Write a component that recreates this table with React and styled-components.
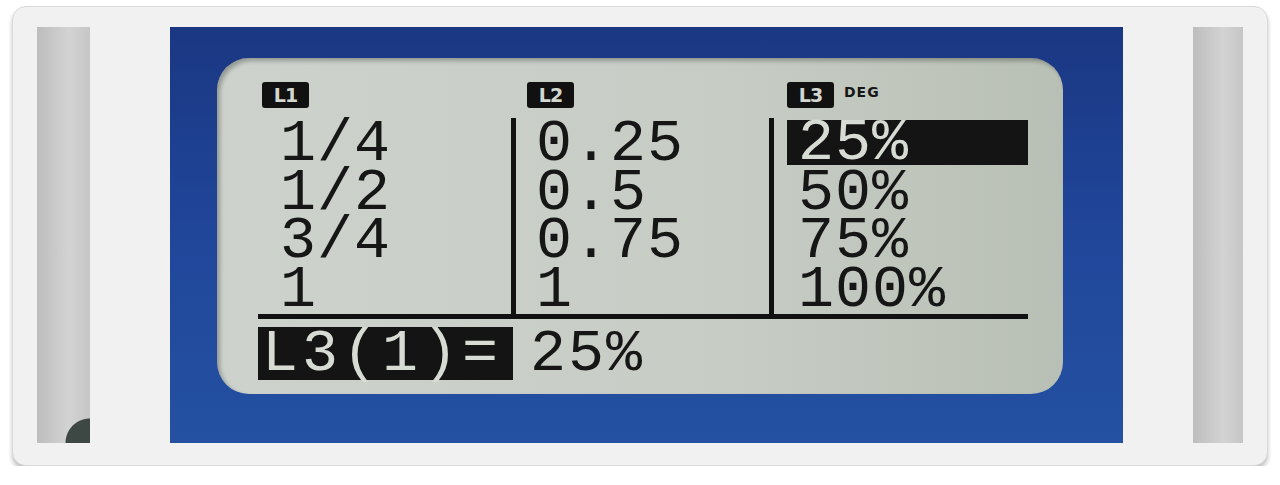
import styled, { createGlobalStyle } from 'styled-components';

const GlobalStyle = createGlobalStyle`
  html, body {
    margin: 0;
    padding: 0;
    background: #ffffff;
  }
  body {
    font-family: "Liberation Mono", "DejaVu Sans Mono", monospace;
  }
`;

const Frame = styled.div`
  box-sizing: border-box;
  margin: 6px 12px 0;
  height: 460px;
  border-radius: 14px;
  background: #f1f1f1;
  border: 1px solid #d9d9d9;
  box-shadow: 0 4px 4px rgba(0, 0, 0, 0.24);
  display: flex;
  padding: 20px 24px 22px 24px;
`;

const Strip = styled.div`
  width: ${(p) => p.$width}px;
  margin: ${(p) => p.$margin};
  background: ${(p) =>
      p.$knob
        ? 'radial-gradient(circle at 100% 100%, #3d4744 0 24px, transparent 25px), '
        : ''}
    linear-gradient(90deg, #bdbdbd, #d3d3d3 60%, #c6c6c6);
`;

const Bezel = styled.div`
  box-sizing: border-box;
  flex: 1;
  padding: 31px 60px 49px 47px;
  background: linear-gradient(180deg, #1a3782 0%, #20469a 50%, #2451a2 100%);
`;

const Lcd = styled.div`
  box-sizing: border-box;
  height: 100%;
  border-radius: 32px;
  padding: 24px 35px 0 41px;
  background: linear-gradient(90deg, #cdd3cc 0%, #c7cdc5 60%, #b8bfb4 100%);
  box-shadow: inset 3px 3px 4px rgba(0, 0, 0, 0.28);
  color: #161616;
`;

const Table = styled.div`
  display: grid;
  grid-template-columns: 253px 258px 259px;
  border-bottom: 5px solid #111;
`;

const Column = styled.div`
  display: flex;
  flex-direction: column;
`;

const Header = styled.div`
  display: flex;
  align-items: flex-start;
  height: 26px;
  padding-left: ${(p) => p.$indent}px;
  margin-bottom: 10px;
`;

const Badge = styled.span`
  display: inline-flex;
  align-items: center;
  justify-content: center;
  width: 47px;
  height: 26px;
  border-radius: 3px;
  background: #111;
  color: #d2d7cf;
  font-family: "DejaVu Sans", sans-serif;
  font-weight: 700;
  font-size: 19px;
  letter-spacing: -1px;
`;

const Mode = styled.span`
  margin: 2px 0 0 10px;
  font-family: "DejaVu Sans", sans-serif;
  font-weight: 700;
  font-size: 14px;
  letter-spacing: 1px;
`;

const List = styled.div`
  padding-top: 2px;
  border-left: ${(p) => (p.$divider ? '5px solid #111' : '5px solid transparent')};
  margin-left: ${(p) => (p.$divider ? 0 : -5)}px;
`;

const Row = styled.div`
  height: 48.5px;
  line-height: 48.5px;
  font-size: 60px;
  letter-spacing: 1px;
  white-space: pre;
  padding-left: ${(p) => p.$indent}px;
`;

const ActiveRow = styled.div`
  height: 45px;
  line-height: 46px;
  margin: 0 0 3.5px 13px;
  padding-left: 11px;
  font-size: 60px;
  letter-spacing: 1px;
  background: #141414;
  color: #d6dbd3;
`;

const Result = styled.div`
  display: flex;
  align-items: center;
  margin-top: 8px;
  height: 53px;
`;

const Label = styled.div`
  box-sizing: border-box;
  width: 255px;
  height: 53px;
  line-height: 54px;
  padding-left: 4px;
  background: #141414;
  color: #d6dbd3;
  font-size: 60px;
  letter-spacing: 4px;
`;

const Value = styled.div`
  margin-left: 17px;
  font-size: 60px;
  line-height: 54px;
  letter-spacing: 2px;
`;

const columns = [
  { name: 'L1', badge: 4, indent: 22, divider: false, rows: ['1/4', '1/2', '3/4', '1'] },
  { name: 'L2', badge: 16, indent: 20, divider: true, rows: ['0.25', '0.5', '0.75', '1'] },
  { name: 'L3', badge: 18, indent: 24, divider: true, mode: 'DEG', active: 0, rows: ['25%', '50%', '75%', '100%'] },
];

export default function App() {
  return (
    <>
      <GlobalStyle />
      <Frame>
        <Strip $width={53} $margin="0 80px 0 0" $knob />
        <Bezel>
          <Lcd>
            <Table>
              {columns.map((col) => (
                <Column key={col.name}>
                  <Header $indent={col.badge}>
                    <Badge>{col.name}</Badge>
                    {col.mode && <Mode>{col.mode}</Mode>}
                  </Header>
                  <List $divider={col.divider}>
                    {col.rows.map((r, i) =>
                      i === col.active ? (
                        <ActiveRow key={r}>{r}</ActiveRow>
                      ) : (
                        <Row key={r} $indent={col.indent}>{r}</Row>
                      )
                    )}
                  </List>
                </Column>
              ))}
            </Table>
            <Result>
              <Label>L3(1)=</Label>
              <Value>25%</Value>
            </Result>
          </Lcd>
        </Bezel>
        <Strip $width={50} $margin="0 0 0 70px" />
      </Frame>
    </>
  );
}
